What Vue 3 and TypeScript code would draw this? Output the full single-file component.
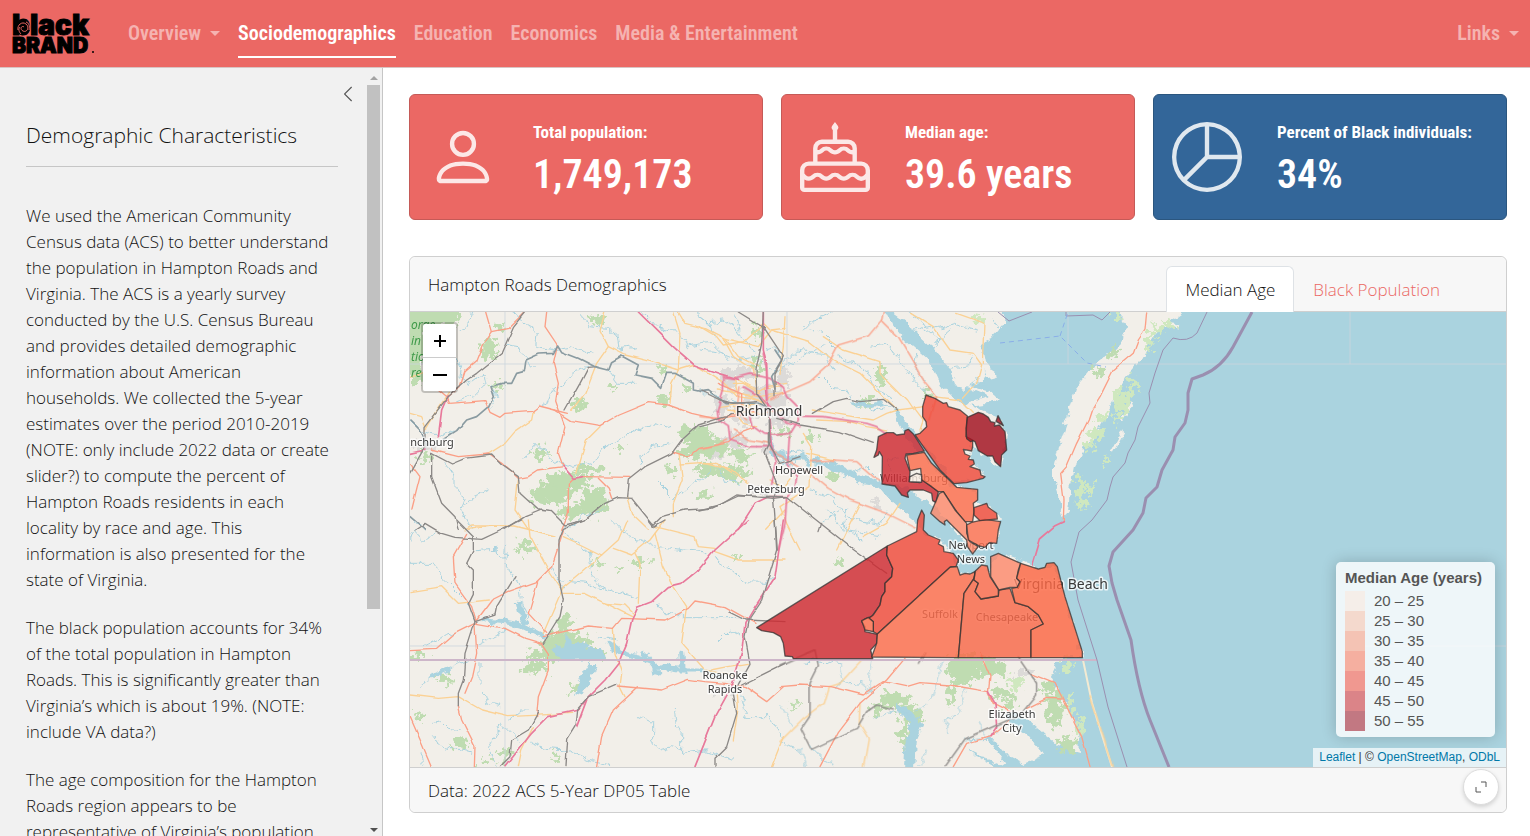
<script setup lang="ts">
interface NavItem { label: string; menu?: boolean; active?: boolean }
interface ValueBox { title: string; value: string; icon: string; tone: string }
interface Band { label: string; color: string }
interface Layer { kind: string; x: number; y: number; lines: string[] }
interface Area { name: string; fill: string; points: string }
interface Place { text: string; x: number; y: number; size: number }

const nav: NavItem[] = [
  { label: 'Overview', menu: true },
  { label: 'Sociodemographics', active: true },
  { label: 'Education' },
  { label: 'Economics' },
  { label: 'Media & Entertainment' },
]

const paragraphs: string[] = [
  'We used the American Community Census data (ACS) to better understand the population in Hampton Roads and Virginia. The ACS is a yearly survey conducted by the U.S. Census Bureau and provides detailed demographic information about American households. We collected the 5-year estimates over the period 2010-2019 (NOTE: only include 2022 data or create slider?) to compute the percent of Hampton Roads residents in each locality by race and age. This information is also presented for the state of Virginia.',
  'The black population accounts for 34% of the total population in Hampton Roads. This is significantly greater than Virginia’s which is about 19%. (NOTE: include VA data?)',
  'The age composition for the Hampton Roads region appears to be representative of Virginia’s population',
]

const boxes: ValueBox[] = [
  {
    title: 'Total population:', value: '1,749,173', tone: 'coral',
    icon: 'M8 8a3 3 0 1 0 0-6 3 3 0 0 0 0 6Zm2-3a2 2 0 1 1-4 0 2 2 0 0 1 4 0Zm4 8c0 1-1 1-1 1H3s-1 0-1-1 1-4 6-4 6 3 6 4Zm-1-.004c-.001-.246-.154-.986-.832-1.664C11.516 10.68 10.289 10 8 10c-2.29 0-3.516.68-4.168 1.332-.678.678-.83 1.418-.832 1.664h10Z',
  },
  {
    title: 'Median age:', value: '39.6 years', tone: 'coral',
    icon: 'm7.994.013-.595.79a.747.747 0 0 0 .101 1.01V4H5a2 2 0 0 0-2 2v3H2a2 2 0 0 0-2 2v4a1 1 0 0 0 1 1h14a1 1 0 0 0 1-1v-4a2 2 0 0 0-2-2h-1V6a2 2 0 0 0-2-2H8.5V1.806A.747.747 0 0 0 8.592.802zM4 6a1 1 0 0 1 1-1h6a1 1 0 0 1 1 1v.414a.911.911 0 0 1-.646-.268 1.914 1.914 0 0 0-2.708 0 .914.914 0 0 1-1.292 0 1.914 1.914 0 0 0-2.708 0A.911.911 0 0 1 4 6.414zm0 1.414c.49 0 .98-.187 1.354-.56a.914.914 0 0 1 1.292 0c.748.747 1.96.747 2.708 0a.914.914 0 0 1 1.292 0c.374.373.864.56 1.354.56V9H4zM1 11a1 1 0 0 1 1-1h12a1 1 0 0 1 1 1v.793l-.354.354a.914.914 0 0 1-1.293 0 1.914 1.914 0 0 0-2.707 0 .914.914 0 0 1-1.292 0 1.914 1.914 0 0 0-2.708 0 .914.914 0 0 1-1.292 0 1.914 1.914 0 0 0-2.708 0 .914.914 0 0 1-1.292 0L1 11.793zm11.646 1.854a1.915 1.915 0 0 0 2.354.279V15H1v-1.867c.737.452 1.715.36 2.354-.28a.914.914 0 0 1 1.292 0c.748.748 1.96.748 2.708 0a.914.914 0 0 1 1.292 0c.748.748 1.96.748 2.707 0a.914.914 0 0 1 1.293 0Z',
  },
  {
    title: 'Percent of Black individuals:', value: '34%', tone: 'blue',
    icon: 'M7.5 1.018a7 7 0 0 0-4.79 11.566L7.5 7.793V1.018zm1 0V7.5h6.482A7.001 7.001 0 0 0 8.5 1.018zM14.982 8.5H8.207l-4.79 4.79A7 7 0 0 0 14.982 8.5zM0 8a8 8 0 1 1 16 0A8 8 0 0 1 0 8z',
  },
]

const bands: Band[] = [
  { label: '20 – 25', color: '#f5eee9' },
  { label: '25 – 30', color: '#f4d9cd' },
  { label: '30 – 35', color: '#f4c3b4' },
  { label: '35 – 40', color: '#f5afa0' },
  { label: '40 – 45', color: '#f09890' },
  { label: '45 – 50', color: '#db8488' },
  { label: '50 – 55', color: '#c27882' },
]

// Green areas: centre x, centre y, half width, half height
const woods: number[][] = [
  [428, 316, 32, 12], [416, 350, 10, 36], [489, 349, 9, 9], [500, 326, 4, 4], [578, 400, 4, 3], [597, 320, 6, 6],
  [497, 386, 6, 3], [580, 405, 7, 5], [662, 370, 4, 4], [540, 453, 7, 7], [590, 470, 16, 5], [565, 482, 22, 10],
  [550, 495, 22, 9], [594, 501, 14, 14], [572, 512, 14, 6], [694, 434, 16, 8], [706, 447, 22, 10], [690, 452, 12, 6],
  [718, 470, 24, 7], [738, 475, 12, 5], [741, 455, 10, 7], [757, 330, 4, 8], [664, 400, 6, 5], [686, 388, 4, 4],
  [703, 494, 8, 4], [671, 470, 5, 5], [426, 458, 6, 5], [620, 448, 3, 4], [612, 388, 3, 3], [812, 438, 7, 4],
  [833, 475, 6, 6], [864, 402, 8, 4], [880, 375, 5, 12], [760, 365, 4, 10], [926, 392, 4, 3], [782, 433, 6, 4],
  [526, 547, 10, 6], [641, 562, 9, 3], [598, 565, 4, 3], [619, 569, 5, 2], [738, 557, 5, 2], [838, 563, 5, 5],
  [565, 624, 6, 10], [563, 642, 22, 9], [546, 654, 18, 7], [580, 645, 12, 9], [535, 667, 12, 6], [597, 654, 7, 6],
  [445, 678, 9, 5], [419, 656, 8, 4], [573, 689, 3, 5], [460, 742, 8, 6], [505, 755, 5, 6], [556, 758, 3, 5],
  [486, 762, 4, 4], [418, 716, 3, 6], [795, 706, 5, 3], [963, 668, 16, 16], [992, 668, 14, 9], [952, 694, 4, 12],
  [894, 700, 16, 7], [912, 714, 11, 10], [905, 735, 5, 14], [876, 710, 4, 8], [1048, 688, 6, 8], [1055, 710, 9, 16],
  [1068, 745, 9, 9], [1001, 694, 10, 5], [1010, 704, 8, 6], [979, 662, 6, 6], [1098, 371, 7, 5], [1114, 352, 5, 4],
]
const marsh: number[][] = [
  [1122, 400, 7, 12], [1132, 386, 4, 10], [1096, 434, 7, 8], [1089, 445, 5, 5], [1080, 490, 5, 14], [1090, 488, 4, 6],
  [1083, 504, 6, 5], [1150, 340, 4, 10], [1158, 330, 5, 6], [1118, 418, 5, 5], [1102, 418, 6, 4], [1068, 665, 5, 7],
  [1070, 705, 3, 10], [1080, 727, 3, 10], [1105, 460, 3, 5], [1117, 316, 6, 4], [978, 318, 5, 5], [1015, 682, 10, 5], [1168, 324, 4, 5],
]
const towns: number[][] = [
  [730, 380, 8, 12], [745, 372, 12, 7], [760, 395, 18, 10], [772, 400, 14, 12], [782, 378, 6, 12], [722, 405, 8, 8],
  [745, 415, 14, 8], [735, 440, 12, 8], [780, 420, 12, 8], [768, 448, 8, 5], [424, 447, 10, 5], [765, 490, 8, 5],
  [876, 503, 6, 4], [1024, 674, 8, 4], [724, 690, 8, 4], [715, 455, 8, 4],
]

const layers: Layer[] = [
  { kind: 'stream', x: 405, y: 250, lines: [
    '300,283 340,290 350,315 385,350', '150,310 170,350 165,380 200,400 240,370 245,395 200,440 155,455', '320,186 370,230 400,250 395,290 450,300 500,290 560,310',
    '545,350 500,365 480,400 450,410 440,440 405,465', '530,186 550,230 610,235 640,260 645,300 690,290', '710,186 750,230 830,250 850,290 920,280 970,330',
    '360,625 385,590 420,600 440,630 500,655 560,640 600,590 640,570 700,540 750,515 800,530', '120,635 150,680 150,710 185,740 170,780 200,838', '180,770 205,740 250,720',
    '700,640 740,590 800,580', '760,700 800,740 870,700 920,660', '480,838 550,790 600,780', '15,510 50,545 110,560 150,540', '610,360 640,400 690,400', '880,410 910,440 960,450 1040,470',
    '940,650 960,690 1010,700', '870,186 905,215 960,210 1000,240 1050,310', '15,800 60,838', '200,186 190,230 165,245', '250,480 275,440 260,410', '1085,300 1110,290 1130,320',
  ] },
  { kind: 'stream', x: 700, y: 310, lines: [
    '0,120 50,125 110,150 170,140 230,190 260,170 340,125 370,100', '360,195 400,235 440,240 470,290 560,280 590,310', '420,140 500,180 520,230 580,270', '510,105 560,100 600,150 640,210 690,260',
    '240,170 290,120 370,130 400,180', '330,60 370,70 410,110', '630,60 670,50 720,90', '690,110 750,60', '650,130 640,180 680,210', '740,180 800,170 820,140', '790,240 830,210 860,230 850,180',
    '210,410 250,430 300,420 350,460', '240,450 280,470 290,430', '310,60 340,30 400,6', '430,500 500,470 530,500', '440,600 430,650 480,690', '370,640 420,600', '480,280 520,300 560,290',
    '600,440 560,450 580,490', '860,110 900,60 880,30', '330,540 400,560 440,620 540,640 560,600', '380,600 430,660 540,680', '620,6 700,60 760,40 830,60', '100,6 120,60', '0,20 30,40 40,80',
  ] },
  { kind: 'stream', x: 405, y: 520, lines: [
    '210,92 270,88 300,115 305,75', '300,130 345,200 350,250 365,290', '480,40 550,95 560,150 590,205 700,235', '760,80 840,90 900,95', '920,110 980,150 1020,188 1080,190 1100,170',
    '620,0 660,40 760,85', '15,130 80,130 130,190 190,250', '55,380 75,370 150,340', '45,500 60,480 110,462 150,435 200,420', '225,425 225,490', '80,610 110,605 130,625 170,630', '75,650 120,680 170,690 205,700',
    '700,590 740,610 740,660 770,690 800,680 830,690', '805,570 810,610 830,640 830,700', '755,250 780,280 820,290 900,290 1010,290', '940,365 975,330 1005,350', '380,670 420,685 480,690 560,725 620,740',
    '1000,500 1025,590 1090,590 1130,650', '830,700 900,690 980,720', '440,150 470,210', '590,210 540,190 450,180', '240,520 250,550 290,560', '310,600 350,570 370,570', '340,660 290,610 250,680 270,740', '50,690 60,740', '580,350 640,360',
    '220,370 300,330', '20,60 30,30 55,60 100,30',
  ] },
  { kind: 'stream', x: 780, y: 640, lines: [
    '70,60 140,65 180,75 190,120 170,140', '175,130 250,125 270,160', '280,50 270,110 270,160', '285,235 340,215 400,230', '500,290 500,240 530,220 550,190 560,140', '420,380 440,330', '0,310 60,330 80,380',
    '90,320 130,360 160,375', '410,210 440,190', '600,250 620,290', '0,200 40,260', '450,180 490,60', '560,300 620,295 650,280',
  ] },
  { kind: 'river', x: 700, y: 310, lines: [
    '590,300 600,335 630,360 650,380', '210,380 220,430 270,445 310,440 330,470', '470,275 500,290 540,275',
  ] },
  { kind: 'river', x: 405, y: 520, lines: [
    '240,300 300,305 345,315 375,330 415,350', '610,370 650,400 700,410 740,425 760,440 820,450 880,450 940,470', '750,430 755,460', '830,400 835,450', '80,470 130,450', '340,250 350,290 365,310', '720,400 750,440 800,445',
  ] },
  { kind: 'yellow', x: 405, y: 250, lines: [
    '600,186 585,240 610,290 575,340 540,430 500,480', '610,290 660,315 740,335 820,360 870,345', '805,186 825,250 820,360 800,400 795,460', '820,186 840,220 900,235 960,265 1000,320 1060,350',
    '960,265 1060,290 1100,240 1140,235', '385,484 380,510 330,545 300,580 250,612', '585,530 545,570 530,620 515,670', '822,610 832,690 805,760 805,800', '825,645 900,640 980,660 1030,700',
    '340,690 330,780 370,838', '665,740 680,790 730,838', '15,490 50,500 65,535', '60,540 90,490 130,430', '15,385 60,370', '880,350 960,400 1000,440 1060,450', '990,380 1000,430 1060,440 1140,430', '190,838 260,828 300,830', '1140,780 1085,838',
    '940,420 1010,430 1080,460', '940,470 1000,460 1060,480', '1000,390 1060,420 1130,410',
  ] },
  { kind: 'yellow', x: 700, y: 310, lines: [
    '0,50 50,80 70,105 130,95 190,40 210,60', '215,60 330,95 400,150 480,190 550,260 590,300', '70,85 100,140 160,180 170,230', '370,80 430,120 540,155 540,190 620,270 640,300', '635,10 700,50 750,120 820,130 845,165 830,220 790,265',
    '770,10 855,40 850,160', '340,300 400,310 520,330 560,310 590,300 670,290', '350,330 450,335 500,350 560,360', '320,430 400,450', '600,580 560,640 490,680', '300,720 260,640 240,590 330,530 335,410 310,370', '240,190 250,110 255,20',
    '180,250 130,220 100,220', '220,260 180,280 100,290', '250,300 180,310 80,300', '150,260 200,230 260,220', '480,580 430,680 410,720', '700,260 780,270 820,310', '100,300 130,340 170,350', '0,462 50,460 110,500', '210,510 250,530 280,490', '640,290 670,330 660,360',
  ] },
  { kind: 'yellow', x: 405, y: 520, lines: [
    '180,30 200,18 330,18 450,48', '370,0 375,50 430,150 470,210', '475,50 530,75 590,105 640,60 665,0', '590,105 475,200 415,340', '625,85 680,105 735,60 780,0', '690,100 705,130 700,250', '750,40 775,140 800,190 845,260 830,370 900,450 1000,470',
    '475,220 540,220 600,250 680,290', '15,215 110,200 160,250 250,240', '15,525 100,535 160,530 230,570 310,590 500,580', '625,325 630,400 650,460 645,500 660,530', '930,95 1000,120 1140,120', '750,20 870,50 880,80 930,85',
    '385,620 350,690 340,740', '920,450 970,440 1030,430', '995,500 1000,560 985,660', '1135,650 1100,740', '600,250 660,255 690,285',
  ] },
  { kind: 'yellow', x: 780, y: 640, lines: [
    '245,60 180,130 145,140 130,190 70,235 0,305', '240,190 238,250 265,295 250,380', '930,170 960,260 1000,380',
  ] },
  { kind: 'salmon', x: 405, y: 250, lines: [
    '245,186 262,245 235,285 215,335 180,365 165,410 125,445 130,460 240,452 255,487 285,502 300,490 382,484 403,468 450,480 500,512 585,527 640,495 730,458 790,465 860,490 940,508 1000,500', '262,245 310,235 345,200 360,186',
    '425,186 420,230 457,285 445,340 460,400 452,450 480,530 460,610 475,650', '505,685 490,700 490,790 470,838', '95,420 125,445', '80,600 160,620 250,612 290,640 340,685 370,680 400,660 475,650', '535,680 675,682', '580,685 610,715 620,745',
    '800,605 850,620 880,595 970,578 1010,545 1050,530', '15,640 45,680 20,780', '450,480 490,490', '940,400 1010,430 1010,470 1060,490',
  ] },
  { kind: 'salmon', x: 700, y: 310, lines: [
    '550,6 545,30 505,78 415,105 380,170 330,215 250,250 215,270', '545,30 595,80 640,155 670,210 710,260 690,330', '0,320 60,325 130,310', '330,455 400,450 470,455 520,500 560,520', '210,420 330,490 385,535 450,570 560,610 650,655', '0,415 50,405 80,390',
    '210,400 150,390 100,360', '120,230 110,300 140,330',
  ] },
  { kind: 'salmon', x: 405, y: 520, lines: [
    '185,40 145,110 150,190 200,260 215,310 300,325 360,355 410,370', '15,392 95,388 150,340 210,310', '210,310 215,400 200,470 180,520', '215,300 260,240 310,215 395,185 440,140 460,80 475,30', '398,185 370,280 425,340',
    '415,350 550,318 625,325 650,295 780,300 850,265 870,243 960,260 1050,310', '410,370 430,400 430,450 400,530 395,590', '160,560 170,600 210,680 208,740', '15,590 50,670 80,740', '640,498 770,510 850,478 900,485 960,490 1020,500 1085,545 1135,500', '700,500 625,570 590,650 575,740',
  ] },
  { kind: 'salmon', x: 780, y: 640, lines: [
    '0,140 60,135 150,140 250,165 310,125 380,140 420,128 510,135 625,155', '375,55 320,120 240,190 175,275 120,380', '600,40 630,110 625,160 640,190 690,215', '740,205 800,175 845,177', '750,100 825,130 850,180 905,290 930,380', '690,240 630,290 560,310 520,380',
  ] },
  { kind: 'salmon', x: 1000, y: 300, lines: ['440,36 435,90 415,120 400,160 340,210 300,290 275,330 265,360 230,430 200,500 182,520 192,600 190,665'] },
  { kind: 'motorway', x: 405, y: 250, lines: [
    '700,186 765,250 805,290 868,345 940,370 1000,388', '1075,186 1075,300 1085,340 1085,420 1100,600', '127,440 110,480 100,560', '475,650 505,685 535,680', '15,610 60,600', '1140,740 1090,740 1050,760 1000,838',
  ] },
  { kind: 'motorway', x: 700, y: 310, lines: [
    '70,200 100,205 150,192 210,205 250,235 260,260 290,290 295,330 270,370 230,375 190,372 160,350 150,310', '72,200 70,240 52,300 55,330 85,350 90,390 150,410 215,410', '190,130 200,180 205,270', '300,318 370,320 500,340 530,350 560,370',
    '265,380 262,430 260,460 290,500 285,530 260,560 255,640 235,720', '215,410 230,460 215,520', '130,230 180,260 260,340 300,350',
  ] },
  { kind: 'motorway', x: 405, y: 520, lines: [
    '1030,0 985,40 930,90 880,150 830,190 790,200 740,245 697,262 680,300 665,370 640,430 600,480 550,530 520,570 430,590 380,640 300,740', '1135,0 1110,170 1050,260 1020,310 1010,400 980,500 930,590 870,740', '545,540 515,620',
  ] },
  { kind: 'motorway', x: 780, y: 640, lines: ['625,155 645,190 650,260 630,290'] },
  { kind: 'motorway', x: 1000, y: 300, lines: ['190,665 165,677 118,717 95,795'] },
  { kind: 'rail', x: 405, y: 250, lines: [
    '360,186 325,230 290,310 215,370 185,390 125,445 60,530 60,590 15,670', '575,350 550,352 525,400 480,480', '80,610 140,642 180,625 260,615 290,645 340,680 345,730 400,780 440,785 480,825 540,810 600,760 640,743 680,745 745,825 770,800 840,780 920,775 1000,738 1140,740',
    '80,610 80,680 110,760 150,800 160,838', '665,740 670,690 720,650 800,610 830,570 880,525 960,500', '1000,186 1080,235', '300,838 360,800 410,780',
  ] },
  { kind: 'border', x: 405, y: 250, lines: [
    '115,570 155,545 185,510 215,500 250,470 265,440 255,410 290,400 320,400 335,370 355,365 360,330 400,312 445,310 458,285 470,305 520,325 570,350 610,360 620,335 650,318 700,345 690,375 740,385 770,415 785,370 810,370 865,400 865,420 890,425 910,422 960,458 1060,460 1090,475', '15,510 50,545 65,590', '15,800 60,838', '1110,300 1130,330 1100,380 1110,420',
  ] },
  { kind: 'rail', x: 700, y: 310, lines: [
    '190,6 185,100 168,180 170,250 205,300 210,400 195,430 230,520 220,560 232,720', '190,50 250,140 225,190 225,260', '340,310 400,275 440,265 480,275 550,268 590,300', '0,350 60,335 100,310', '230,325 300,345 420,365 520,400', '0,600 60,585 110,555 220,565 260,560 460,718 560,790', '300,440 240,460 205,400 205,330', '357,665 365,640', '0,240 60,270 100,280 170,275',
  ] },
  { kind: 'rail', x: 405, y: 520, lines: [
    '155,0 205,50 205,90 185,130 205,150 205,220 190,250 210,305 180,400 175,480 160,520 160,560', '30,30 60,10 110,40 150,52 230,58 290,30 350,0', '540,0 475,25 462,60 462,180 475,240 465,290 440,330 415,370', '330,170 275,260 270,285 210,305',
    '1110,0 1115,90 1070,240 1030,300 1020,350 1035,430 985,520 995,580 965,680 930,715 930,740', '635,493 550,530 515,570 510,620 485,660 480,740', '400,575 370,630 320,660 315,710 285,740', '970,275 1020,300 1140,305', '1140,430 1080,460 1010,495', '730,0 745,20 780,0',
  ] },
  { kind: 'rail', x: 780, y: 640, lines: [
    '105,30 115,80 90,130 90,225 63,265 95,328 230,265 260,215 290,195 340,207', '715,50 770,130 770,165 720,225 555,297 495,380', '0,75 105,30', '415,70 435,36',
  ] },
]

const areas: Area[] = [
  { name: 'Southampton', fill: '#ce2a31', points: '20,743 412,498 410,525 428,565 425,590 405,610 405,635 395,650 390,675 365,710 345,717 335,725 345,740 345,755 382,763 380,790 362,810 368,836 130,836 127,830 105,828 100,790 92,770 70,758 35,752' },
  { name: 'Isle of Wight', fill: '#ef4a3a', points: '412,498 500,455 503,420 515,390 523,405 520,450 535,465 570,480 565,492 580,500 582,515 610,520 625,540 618,560 602,560 382,762 370,755 370,725 355,715 370,705 390,675 395,650 405,635 405,610 425,590 428,565 410,525' },
  { name: 'Franklin', fill: '#fb6c4c', points: '335,722 355,712 370,725 370,755 345,750' },
  { name: 'Suffolk', fill: '#fb6c4c', points: '382,762 600,562 622,560 630,585 645,580 660,582 676,574 672,595 642,640 625,833 365,831 380,790' },
  { name: 'Chesapeake', fill: '#f86848', points: '676,574 672,600 685,610 675,635 693,657 745,648 747,630 780,625 795,668 835,680 865,705 880,732 843,750 843,833 625,833 642,640 672,595' },
  { name: 'Portsmouth', fill: '#fa6a4c', points: '676,573 695,555 712,558 720,590 745,628 745,648 693,657 675,635 685,610 672,600' },
  { name: 'Norfolk', fill: '#fc8a6c', points: '722,530 745,520 812,550 805,570 800,595 810,605 802,622 780,622 747,630 722,590' },
  { name: 'Virginia Beach', fill: '#fb6643', points: '812,550 865,567 885,562 890,550 912,548 922,560 945,650 997,815 997,833 843,833 843,750 880,732 865,705 835,680 795,668 785,625 802,622 810,605 800,595' },
  { name: 'Gloucester', fill: '#ef4a3a', points: '528,45 555,55 580,70 590,68 595,80 630,90 652,108 648,170 668,180 668,200 665,213 640,208 645,222 660,228 655,238 670,240 673,252 660,260 690,270 693,285 705,290 700,295 650,308 612,311 570,270 495,165 510,160 530,140 528,125 518,110 518,80' },
  { name: 'Mathews', fill: '#a1101f', points: '652,112 685,97 700,102 715,112 722,125 735,128 733,138 748,135 765,155 770,210 755,225 752,260 735,245 728,228 712,228 685,212 675,185 668,182 662,185 650,176 648,145' },
  { name: 'Mathews tip', fill: '#a1101f', points: '744,107 760,137 738,124' },
  { name: 'James City', fill: '#ce2a31', points: '385,170 410,158 430,158 440,165 463,162 465,152 475,148 490,162 523,213 490,220 468,222 465,235 480,275 478,305 510,308 515,298 545,320 565,335 558,368 548,362 545,340 520,330 480,330 472,338 475,352 455,345 435,318 396,312 397,230 388,215 385,225 372,232 380,210' },
  { name: 'York', fill: '#fb6c4c', points: '470,225 523,217 545,250 620,322 683,328 683,360 670,370 672,395 668,425 645,425 620,395 580,335 565,335 545,320 515,300 512,265 480,272' },
  { name: 'Williamsburg', fill: '#f6ebe2', points: '480,290 500,280 515,285 515,307 478,305' },
  { name: 'Newport News', fill: '#fc8a6c', points: '568,340 580,335 615,390 650,430 650,460 660,485 685,500 668,522 652,500 650,480 635,465 590,420 583,425 585,435 570,425 542,400' },
  { name: 'Hampton', fill: '#fb7050', points: '650,435 665,427 705,418 752,425 745,450 742,475 740,490 718,488 705,502 688,498 655,480' },
  { name: 'Poquoson', fill: '#ef4a3a', points: '672,383 710,370 715,382 740,400 742,417 690,422 672,405' },
]

const labels: Place[] = [
  { text: 'Richmond', x: 769, y: 416, size: 14 },
  { text: 'Hopewell', x: 799, y: 474, size: 11 },
  { text: 'Petersburg', x: 776, y: 493, size: 11 },
  { text: 'nchburg', x: 432, y: 446, size: 11 },
  { text: 'Williamsburg', x: 914, y: 482, size: 11 },
  { text: 'Newport', x: 971, y: 549, size: 11 },
  { text: 'News', x: 971, y: 563, size: 11 },
  { text: 'Virginia Beach', x: 1061, y: 589, size: 14 },
  { text: 'Suffolk', x: 940, y: 618, size: 11 },
  { text: 'Chesapeake', x: 1007, y: 621, size: 11 },
  { text: 'Roanoke', x: 725, y: 679, size: 11 },
  { text: 'Rapids', x: 725, y: 693, size: 11 },
  { text: 'Elizabeth', x: 1012, y: 718, size: 11 },
  { text: 'City', x: 1012, y: 732, size: 11 },
]

const at = (l: Layer): string => `translate(${l.x} ${l.y}) scale(0.33333)`
</script>

<template>
  <div class="page">
    <header class="topbar">
      <a class="brand" href="#" aria-label="Black Brand home">
        <svg width="84" height="60" viewBox="0 0 84 60" aria-hidden="true">
          <text x="0" y="31" class="logo-a">black</text>
          <text x="0" y="49" class="logo-b">BRAND</text>
          <circle cx="11" cy="24" r="7" fill="#000" />
          <path d="M6 26c-1-5 4-9 8-6s1 9-3 7-1-6 1-4M9 30c-2-2-3-5-1-7M14 18c3 1 4 4 3 8" fill="none" stroke="#eb6864" stroke-width="1" />
          <circle cx="81" cy="48" r="1" />
        </svg>
      </a>
      <nav class="links">
        <a v-for="n in nav" :key="n.label" href="#" class="link" :class="{ active: n.active }">{{ n.label }}<i v-if="n.menu" class="caret"></i></a>
        <a href="#" class="link last">Links<i class="caret"></i></a>
      </nav>
    </header>

    <div class="body">
      <aside class="sidebar">
        <div class="scroller">
          <button class="collapse" type="button" aria-label="Collapse sidebar">
            <svg width="18" height="18" viewBox="0 0 16 16"><path fill="#555" d="M11.354 1.646a.5.5 0 0 1 0 .708L5.707 8l5.647 5.646a.5.5 0 0 1-.708.708l-6-6a.5.5 0 0 1 0-.708l6-6a.5.5 0 0 1 .708 0z" /></svg>
          </button>
          <h2>Demographic Characteristics</h2>
          <p v-for="p in paragraphs" :key="p">{{ p }}</p>
        </div>
        <div class="bar" aria-hidden="true">
          <svg width="8" height="4" viewBox="0 0 8 4"><path d="M0 4 4 0 8 4z" fill="#a3a3a3" /></svg>
          <div class="track"><div class="thumb"></div></div>
          <svg width="8" height="4" viewBox="0 0 8 4"><path d="M0 0 4 4 8 0z" fill="#505050" /></svg>
        </div>
      </aside>

      <main class="main">
        <section class="boxes">
          <article v-for="b in boxes" :key="b.title" class="box" :class="b.tone">
            <div class="showcase"><svg width="70" height="70" viewBox="0 0 16 16" fill="currentColor"><path :d="b.icon" /></svg></div>
            <div class="figures">
              <h3>{{ b.title }}</h3>
              <strong>{{ b.value }}</strong>
            </div>
          </article>
        </section>

        <section class="card">
          <div class="card-head">
            <span>Hampton Roads Demographics</span>
            <div class="tabs" role="tablist">
              <button type="button" role="tab" aria-selected="true" class="tab on">Median Age</button>
              <button type="button" role="tab" aria-selected="false" class="tab">Black Population</button>
            </div>
          </div>

          <div class="map">
            <svg class="canvas" viewBox="410 312 1096 455" preserveAspectRatio="xMidYMid slice" role="img" aria-label="Map of median age in Hampton Roads">
              <defs>
                <filter id="rough" x="-5%" y="-5%" width="110%" height="110%">
                  <feTurbulence type="fractalNoise" baseFrequency="0.16" numOctaves="3" seed="4" />
                  <feDisplacementMap in="SourceGraphic" scale="22" xChannelSelector="R" yChannelSelector="G" />
                </filter>
                <filter id="wavy" x="-5%" y="-5%" width="110%" height="110%">
                  <feTurbulence type="fractalNoise" baseFrequency="0.1" numOctaves="3" seed="9" />
                  <feDisplacementMap in="SourceGraphic" scale="10" xChannelSelector="R" yChannelSelector="G" />
                </filter>
                <filter id="bend" x="-5%" y="-5%" width="110%" height="110%">
                  <feTurbulence type="fractalNoise" baseFrequency="0.05" numOctaves="2" seed="2" />
                  <feDisplacementMap in="SourceGraphic" scale="4" xChannelSelector="R" yChannelSelector="G" />
                </filter>
              </defs>

              <rect x="400" y="300" width="1120" height="480" fill="#f2efe9" />
              <g filter="url(#rough)">
                <ellipse v-for="(e, i) in towns" :key="'t' + i" :cx="e[0]" :cy="e[1]" :rx="e[2]" :ry="e[3]" fill="#dcdad8" />
                <ellipse v-for="(e, i) in woods" :key="'w' + i" :cx="e[0]" :cy="e[1]" :rx="e[2]" :ry="e[3]" fill="#bfdcb1" />
              </g>

              <g filter="url(#wavy)" fill="#aad3df">
                <path d="M1005 300H1530V790H1116C1100 745 1090 710 1082 657L1055 568 1040 568 1000 553 993 562 990 572 982 564 973 575 960 573 954 558 944 540 925 534 918 520 905 508 893 503 900 497 918 503 926 500 940 512 968 545 972 552 985 547 997 540 1001 520 990 505 975 503 977 490 952 487 930 462 905 438 892 410 899 412 920 440 955 482 985 477 972 460 970 448 985 455 1000 466 1007 435 998 416 970 406 985 404 1000 400 990 392 970 386 988 378 1000 375 986 366 982 345 992 338 1003 325z" />
                <path d="M885 308 905 322 932 347 950 368 956 386 975 390 990 396 962 405 950 392 942 388 930 362 905 340 893 325z" />
                <path d="M893 503 880 487 862 484 848 476 830 470 812 462 815 458 838 464 858 474 880 480 905 486 922 500 930 520 918 524z" />
                <path d="M895 703 913 713 922 724 916 738 914 770H904L906 735 911 724 895 710z" />
                <path d="M962 745 980 758 1010 772H1110L1082 657H1062L1052 678 1066 702 1078 732 1080 752 1058 746 1030 722 1016 712 1004 718 1030 737 1044 756 1024 764 1008 756 990 735 986 738 1005 765 985 758z" />
                <path d="M552 650 556 644 562 648 566 634 572 642 582 642 588 648 602 648 604 659 560 660z" />
                <path d="M589 664 599 664 590 680 583 692 575 697 578 682z" />
              </g>
              <path d="M1083 660 1092 703 1112 767" fill="none" stroke="#f3ead2" stroke-width="2" />

              <g filter="url(#wavy)">
                <path d="M1115 308 1126 325 1124 340 1112 352 1098 362 1088 374 1076 388 1070 406 1066 422 1060 440 1054 464 1054 484 1060 502 1064 518 1068 512 1070 490 1074 468 1084 450 1096 434 1108 412 1120 390 1128 376 1140 362 1148 346 1160 328 1176 318 1190 308z" fill="#f2efe9" />
                <path d="M1133 402 1122 420M1123 432 1112 452M1165 325l14 2" stroke="#f2efe9" stroke-width="3" />
              </g>
              <g filter="url(#rough)">
                <ellipse v-for="(e, i) in marsh" :key="'m' + i" :cx="e[0]" :cy="e[1]" :rx="e[2]" :ry="e[3]" fill="#cfe8bf" />
                <ellipse cx="1098" cy="371" rx="7" ry="5" fill="#bfdcb1" />
                <ellipse cx="1113" cy="353" rx="5" ry="4" fill="#bfdcb1" />
                <ellipse cx="1055" cy="710" rx="8" ry="18" fill="#bfdcb1" />
                <ellipse cx="1066" cy="745" rx="10" ry="8" fill="#bfdcb1" />
              </g>

              <g class="grid"><path d="M410 364H1506M505 312V767M787 312V364M1068 312V364M1350 312V364M410 646H505M1350 646H1506" /></g>

              <g filter="url(#wavy)">
                <template v-for="(l, i) in layers" :key="'s' + i">
                  <g v-if="l.kind === 'stream' || l.kind === 'river'" :transform="at(l)" :class="l.kind">
                    <polyline v-for="p in l.lines" :key="p" :points="p" />
                  </g>
                </template>
              </g>
              <g filter="url(#bend)">
                <template v-for="(l, i) in layers" :key="'r' + i">
                  <g v-if="l.kind !== 'stream' && l.kind !== 'river'" :transform="at(l)" :class="l.kind">
                    <polyline v-for="p in l.lines" :key="p" :points="p" />
                  </g>
                </template>
              </g>

              <path d="M410 660H1097" fill="none" stroke="#cdb6c9" stroke-width="2" />
              <path class="limit thin" d="M1207 312 1197 333Q1188 343 1173 338L1163 350 1155 373 1149 393 1150 403 1138 427 1135 440 1128 453 1125 463 1113 477 1110 487 1107 500 1092 520 1079 532 1075 547 1071 562 1078 600 1097 660 1108 707 1127 767" />
              <path class="limit thin" d="M998 312 1009 321 1032 312M1066 312V316L1093 315 1102 320 1110 312" />
              <path class="limit thick" d="M1252 312 1233 347Q1222 367 1203 375L1192 379 1188 393 1188 410 1185 423 1175 437 1173 450 1162 470 1157 487 1146 498 1143 513 1133 530 1113 552 1109 566 1112 583 1117 600 1131 640Q1138 690 1150 720L1169 767" />
              <path class="ferry" d="M1000 343 1060 336 1087 363 1106 367M1060 336 1068 312" />

              <g class="forest">
                <text x="411" y="329">orge</text>
                <text x="411" y="345">in</text>
                <text x="411" y="361">tio</text>
                <text x="411" y="377">re</text>
              </g>
              <text v-for="l in labels" :key="l.text" :x="l.x" :y="l.y" :font-size="l.size" class="place">{{ l.text }}</text>

              <g class="areas" transform="translate(750 380) scale(0.33333)">
                <polygon v-for="a in areas" :key="a.name" :points="a.points" :fill="a.fill" />
              </g>
            </svg>

            <div class="zoom">
              <button type="button" aria-label="Zoom in"><svg width="14" height="14" viewBox="0 0 14 14"><path d="M7 1v12M1 7h12" stroke="#000" stroke-width="2" /></svg></button>
              <button type="button" aria-label="Zoom out"><svg width="14" height="14" viewBox="0 0 14 14"><path d="M0 7h14" stroke="#000" stroke-width="2" /></svg></button>
            </div>

            <div class="legend">
              <strong>Median Age (years)</strong>
              <ul>
                <li v-for="b in bands" :key="b.label"><i :style="{ background: b.color }"></i>{{ b.label }}</li>
              </ul>
            </div>

            <div class="credit"><a href="#">Leaflet</a> | © <a href="#">OpenStreetMap</a>, <a href="#">ODbL</a></div>
          </div>

          <div class="card-foot">Data: 2022 ACS 5-Year DP05 Table</div>
          <button class="expand" type="button" aria-label="Expand">
            <svg width="12" height="12" viewBox="0 0 12 12"><path d="M6 1h5v5M1 6v5h5" fill="none" stroke="#555" stroke-width="1" /></svg>
          </button>
        </section>
      </main>
    </div>
  </div>
</template>

<style>
body { margin: 0; }
</style>

<style scoped>
* { box-sizing: border-box; }
.page { height: 100vh; display: flex; flex-direction: column; overflow: hidden; font-family: "Open Sans", "Noto Sans", sans-serif; font-size: 17px; font-weight: 350; color: #111; background: #fff; }
button { font: inherit; cursor: pointer; }

.topbar { height: 68px; flex: none; display: flex; align-items: center; padding: 0 11px 0 12px; background: #eb6864; border-bottom: 1px solid #d8c4c3; }
.brand { display: flex; margin-right: 32px; color: #000; }
.brand svg { overflow: visible; }
.logo-a { font: 900 28px "Inter", sans-serif; stroke: #000; stroke-width: 1px; }
.logo-b { font: 900 21px "Inter", sans-serif; stroke: #000; stroke-width: 1px; }
.links { flex: 1; display: flex; gap: 18px; font-family: "Liberation Sans Narrow", "Roboto Condensed", "DejaVu Sans Condensed", sans-serif; font-weight: 600; font-size: 20px; }
.link { display: flex; align-items: center; padding-top: 2px; color: #f5b3b1; text-decoration: none; line-height: 45px; border-bottom: 2px solid transparent; white-space: nowrap; }
.link.active { color: #fff; border-bottom-color: #fff; }
.last { margin-left: auto; }
.caret { margin-left: 9px; border: 5px solid transparent; border-top-color: currentColor; border-bottom: 0; }

.body { flex: 1; min-height: 0; display: flex; }
.sidebar { width: 383px; flex: none; display: flex; background: #f1f1f1; border-right: 1px solid #c6c6c6; }
.scroller { flex: 1; overflow-y: auto; scrollbar-width: none; padding: 16px 27px 0 26px; display: flex; flex-direction: column; }
.scroller > * { flex: none; }
.collapse { align-self: flex-end; width: 20px; height: 20px; margin-right: -20px; padding: 0; border: 0; background: none; display: grid; place-items: center; }
h2 { margin: 16px 0 36px; padding-bottom: 16px; border-bottom: 1px solid #c6c6c6; font-weight: 350; font-size: 21px; line-height: 30px; white-space: nowrap; }
.scroller p { margin: 0 0 22px; padding-right: 3px; line-height: 26px; }
.bar { width: 17px; display: flex; flex-direction: column; align-items: center; padding: 8px 0 4px; }
.track { flex: 1; width: 13px; margin: 5px 0; }
.thumb { height: 71%; background: #c1c1c1; }

.main { flex: 1; min-width: 0; display: flex; flex-direction: column; gap: 36px; padding: 26px 23px 23px 26px; }
.boxes { display: grid; grid-template-columns: repeat(3, 1fr); gap: 18px; }
.box { height: 126px; display: flex; align-items: center; border: 1px solid #c55a57; border-radius: 6px; color: #fff; }
.coral { background: #eb6864; }
.blue { background: #336699; border-color: #2b567f; }
.showcase { width: 106px; flex: none; display: grid; place-items: center; opacity: .85; }
.figures { padding: 12px 0 0 17px; font-family: "Liberation Sans Narrow", "Roboto Condensed", "DejaVu Sans Condensed", sans-serif; white-space: nowrap; }
h3 { margin: 0; font-size: 17px; line-height: 24px; font-weight: 700; }
.figures strong { display: block; font-size: 40px; line-height: 62px; font-weight: 600; }

.card { position: relative; flex: 1; min-height: 0; display: flex; flex-direction: column; border: 1px solid #cfcfcf; border-radius: 6px; background: #fff; }
.card-head { flex: none; height: 55px; display: flex; align-items: center; justify-content: space-between; padding: 0 47px 0 18px; background: #f7f7f7; border-bottom: 1px solid #cfcfcf; border-radius: 6px 6px 0 0; }
.tabs { align-self: flex-end; display: flex; margin-bottom: -1px; }
.tab { height: 46px; padding: 0 18px; border: 1px solid transparent; border-bottom: 0; background: none; color: #eb6864; border-radius: 6px 6px 0 0; }
.tab.on { background: #fff; border-color: #dee2e6; color: #111; }
.card-foot { flex: none; height: 45px; display: flex; align-items: center; padding: 0 18px; background: #f7f7f7; border-top: 1px solid #cfcfcf; border-radius: 0 0 6px 6px; }
.expand { position: absolute; right: 7px; bottom: 7px; width: 36px; height: 36px; display: grid; place-items: center; padding: 0; border: 1px solid #ddd; border-radius: 50%; background: #fff; box-shadow: 0 2px 4px rgba(0, 0, 0, .15); }

.map { position: relative; flex: 1; min-height: 0; overflow: hidden; font-family: "Liberation Sans", Arial, sans-serif; font-weight: 400; }
.canvas { display: block; width: 100%; height: 100%; }
.canvas polyline { fill: none; stroke-linejoin: round; stroke-linecap: round; }
.stream { stroke: #aad3df; stroke-width: 3; }
.river { stroke: #aad3df; stroke-width: 15; }
.yellow { stroke: #fbd194; stroke-width: 4; }
.salmon { stroke: #fb9f86; stroke-width: 4; }
.motorway { stroke: #e8799b; stroke-width: 5; }
.rail { stroke: #8b8886; stroke-width: 4; }
.border { stroke: #8a9ba1; stroke-width: 5; }
.grid { fill: none; stroke: #ccd6dc; stroke-width: 1; opacity: .8; }
.limit { fill: none; stroke: #9a8fb0; stroke-linejoin: round; }
.thin { stroke-width: 1; }
.thick { stroke-width: 3; }
.ferry { fill: none; stroke: #8aaee8; stroke-width: 1; stroke-dasharray: 5 4; }
.forest { font: italic 12px "Noto Sans", sans-serif; fill: #3f9a49; }
.place { font-family: "Noto Sans", sans-serif; text-anchor: middle; fill: #3a3a3a; stroke: rgba(255, 255, 255, .75); stroke-width: 3px; stroke-linejoin: round; paint-order: stroke; }
.areas { stroke: #333; stroke-opacity: .75; stroke-width: 4; stroke-linejoin: round; fill-opacity: .82; }

.zoom { position: absolute; left: 11px; top: 10px; border: 2px solid rgba(0, 0, 0, .2); border-radius: 4px; background-clip: padding-box; }
.zoom button { display: grid; place-items: center; width: 33px; height: 33px; padding: 0; border: 0; background: #fff; border-radius: 0 0 2px 2px; }
.zoom button:first-child { height: 34px; border-bottom: 1px solid #ccc; border-radius: 2px 2px 0 0; }
.legend { position: absolute; right: 11px; bottom: 30px; min-width: 159px; padding: 6px 9px; border-radius: 5px; background: rgba(255, 255, 255, .8); box-shadow: 0 0 15px rgba(0, 0, 0, .2); font-size: 15px; color: #555; }
.legend strong { display: block; line-height: 20px; margin-bottom: 3px; }
.legend ul { margin: 0; padding: 0; list-style: none; }
.legend li { display: flex; gap: 9px; height: 20px; line-height: 20px; }
.legend i { width: 20px; }
.credit { position: absolute; right: 0; bottom: 0; padding: 0 6px; background: rgba(255, 255, 255, .7); font-size: 12px; line-height: 19px; color: #333; }
.credit a { color: #0078a8; text-decoration: none; }
</style>
